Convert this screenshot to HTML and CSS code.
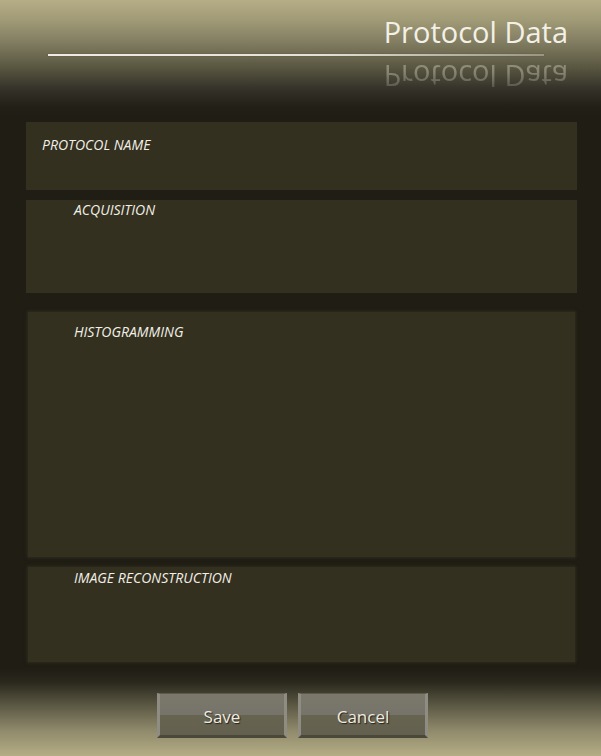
FILE: index.html
```html
<!DOCTYPE html>
<html>
<head>
<meta charset="utf-8">
<title>Protocol Data</title>
<link rel="stylesheet" href="styles.css">
</head>
<body>
<div class="page">
  <header class="hdr">
    <h1 class="title">Protocol Data</h1>
    <div class="rule"></div>
    <div class="reflect" aria-hidden="true">Protocol Data</div>
  </header>
  <main class="content">
    <section class="panel p-name"><span class="label">PROTOCOL NAME</span></section>
    <section class="panel p-acq"><span class="label">ACQUISITION</span></section>
    <section class="panel soft p-hist"><span class="label">HISTOGRAMMING</span></section>
    <section class="panel soft p-recon"><span class="label">IMAGE RECONSTRUCTION</span></section>
  </main>
  <footer class="ftr">
    <button class="btn">Save</button>
    <button class="btn">Cancel</button>
  </footer>
</div>
</body>
</html>
```

FILE: styles.css
```css
html, body {
  margin: 0;
  padding: 0;
}
body {
  width: 601px;
  height: 756px;
  overflow: hidden;
  font-family: "Open Sans", "Noto Sans", sans-serif;
  background: linear-gradient(to bottom,
    #b5ad86 0px,
    #a09a76 20px,
    #858064 40px,
    #5d5a44 65px,
    #36342a 88px,
    #222017 106px,
    #1f1d14 116px,
    #1f1d14 668px,
    #2a281d 682px,
    #5a5743 705px,
    #8f896b 730px,
    #b4ad85 756px);
}
.page {
  display: flex;
  flex-direction: column;
  height: 756px;
}
.hdr {
  height: 122px;
  box-sizing: border-box;
  padding-top: 17px;
}
.title {
  margin: 0;
  text-align: right;
  padding-right: 33px;
  font-weight: 400;
  font-size: 29px;
  line-height: 30px;
  color: #f3f0e6;
}
.rule {
  margin-top: 7px;
  margin-left: 48px;
  width: 496px;
  height: 2px;
  background: linear-gradient(to right, #efebe2 0%, #e4e0d6 55%, rgba(190,186,170,0.55) 100%);
  box-shadow: 0 0 1px rgba(30,28,20,0.5);
}
.reflect {
  margin-top: 5px;
  text-align: right;
  padding-right: 33px;
  font-size: 29px;
  line-height: 30px;
  color: rgba(235,232,220,0.36);
  transform: scaleY(-1);
  -webkit-mask-image: linear-gradient(to top, rgba(0,0,0,1) 35%, rgba(0,0,0,0.4) 100%);
  mask-image: linear-gradient(to top, rgba(0,0,0,1) 35%, rgba(0,0,0,0.4) 100%);
}
.content {
  padding: 0 24px 0 26px;
  display: flex;
  flex-direction: column;
}
.panel {
  background: #333020;
  box-sizing: border-box;
}
.soft {
  margin-left: 2px;
  margin-right: 2px;
  box-shadow: 0 0 3px 1px rgba(51,48,32,0.85);
}
.label {
  display: block;
  font-style: italic;
  font-size: 14px;
  line-height: 16px;
  color: #f2efe6;
}
.p-name {
  height: 68px;
  margin-bottom: 10px;
  padding: 14.5px 0 0 16px;
}
.p-acq {
  height: 93px;
  margin-bottom: 19px;
  padding: 1.5px 0 0 48px;
}
.p-hist {
  height: 245px;
  margin-bottom: 10px;
  padding: 11.5px 0 0 46px;
}
.p-recon {
  height: 95px;
  padding: 2.5px 0 0 46px;
}
.ftr {
  display: flex;
  gap: 11px;
  padding: 31px 0 0 157px;
}
.btn {
  width: 130px;
  height: 45px;
  box-sizing: border-box;
  padding: 3px 0 0;
  border-top: 1px solid #5e5b4a;
  border-left: 3px solid #8e8c83;
  border-right: 3px solid #8e8c83;
  border-bottom: 3px solid #4a4838;
  background: linear-gradient(to bottom, #7b786b 0%, #76736a 52%, #66634f 52%, #636050 100%);
  color: #eeebe2;
  font-family: "Open Sans", "Noto Sans", sans-serif;
  font-size: 17px;
  text-shadow: 1px 1px 1px #24221a;
}
```
